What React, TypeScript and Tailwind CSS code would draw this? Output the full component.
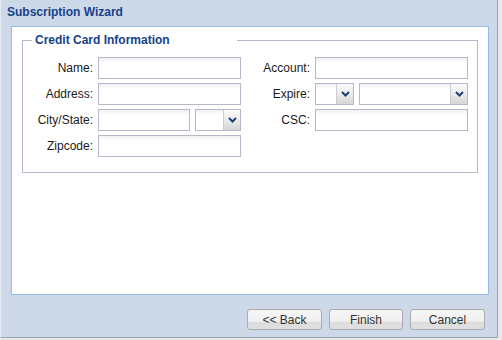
import React from "react";

const font = { fontFamily: '"Liberation Sans", Arial, sans-serif' };

const TextField = ({ w }: { w: string }) => (
  <div
    className={`${w} h-[22px] border border-[#b5b8c8] bg-[linear-gradient(#eef0f3,#ffffff_5px)]`}
  />
);

const Combo = ({ w }: { w: string }) => (
  <div
    className={`${w} h-[22px] flex border border-[#b5b8c8] bg-[linear-gradient(#eef0f3,#ffffff_5px)]`}
  >
    <div className="flex-1" />
    <div className="w-[17px] h-full flex items-center justify-center bg-[linear-gradient(#fbfbfb,#e9e9e9_55%,#d6d6d6)] border-l border-[#c9ccd6]">
      <svg width="9" height="6" viewBox="0 0 9 6">
        <path d="M1 1 L4.5 4.5 L8 1" fill="none" stroke="#1f3f78" strokeWidth="2" />
      </svg>
    </div>
  </div>
);

const Row = ({ label, lw, children }: { label: string; lw: string; children: React.ReactNode }) => (
  <div className="flex items-center h-[22px]">
    <div className={`${lw} text-right text-[12px] text-[#1a1a1a] pr-[5px]`}>{label}</div>
    <div className="flex gap-[5px]">{children}</div>
  </div>
);

const Btn = ({ label, w }: { label: string; w: string }) => (
  <button
    className={`${w} h-[21px] rounded-[3px] border border-[#a9abae] text-[12px] text-[#333] bg-[linear-gradient(#f6f6f6,#f0f0f0_60%,#dcdcdc_62%,#e0e0e0)] flex items-center justify-center`}
  >
    {label}
  </button>
);

export default function App() {
  return (
    <div className="w-[502px] h-[340px] bg-[#e9e9e9]" style={font}>
      <div className="w-[498px] h-[338px] flex flex-col bg-[#cdd9e8] border-l border-l-[#e3eaf3] border-r border-r-[#9aa5b3] border-b border-b-[#9aa5b3]">
        <div className="h-[26px] pl-[6px] pt-[5px] text-[12px] leading-[14px] font-bold text-[#15428b]">
          Subscription Wizard
        </div>
        <div className="ml-[10px] mr-[8px] h-[269px] bg-white border border-[#99bbe8] pt-[6px] px-[10px]">
          <fieldset className="border border-[#b5b8c8] h-[140px] px-0">
            <legend className="ml-[9px] w-[205px] pl-[3px] text-[12px] leading-[14px] font-bold text-[#15428b]">
              Credit Card Information
            </legend>
            <div className="flex pt-[10px]">
              <div className="flex flex-col gap-[4px]">
                <Row label="Name:" lw="w-[75px]">
                  <TextField w="w-[143px]" />
                </Row>
                <Row label="Address:" lw="w-[75px]">
                  <TextField w="w-[143px]" />
                </Row>
                <Row label="City/State:" lw="w-[75px]">
                  <TextField w="w-[92px]" />
                  <Combo w="w-[46px]" />
                </Row>
                <Row label="Zipcode:" lw="w-[75px]">
                  <TextField w="w-[143px]" />
                </Row>
              </div>
              <div className="flex flex-col gap-[4px]">
                <Row label="Account:" lw="w-[74px]">
                  <TextField w="w-[153px]" />
                </Row>
                <Row label="Expire:" lw="w-[74px]">
                  <Combo w="w-[39px]" />
                  <Combo w="w-[109px]" />
                </Row>
                <Row label="CSC:" lw="w-[74px]">
                  <TextField w="w-[153px]" />
                </Row>
              </div>
            </div>
          </fieldset>
        </div>
        <div className="flex justify-end gap-[7px] pr-[12px] pt-[14px]">
          <Btn label="<< Back" w="w-[75px]" />
          <Btn label="Finish" w="w-[74px]" />
          <Btn label="Cancel" w="w-[75px]" />
        </div>
      </div>
    </div>
  );
}
